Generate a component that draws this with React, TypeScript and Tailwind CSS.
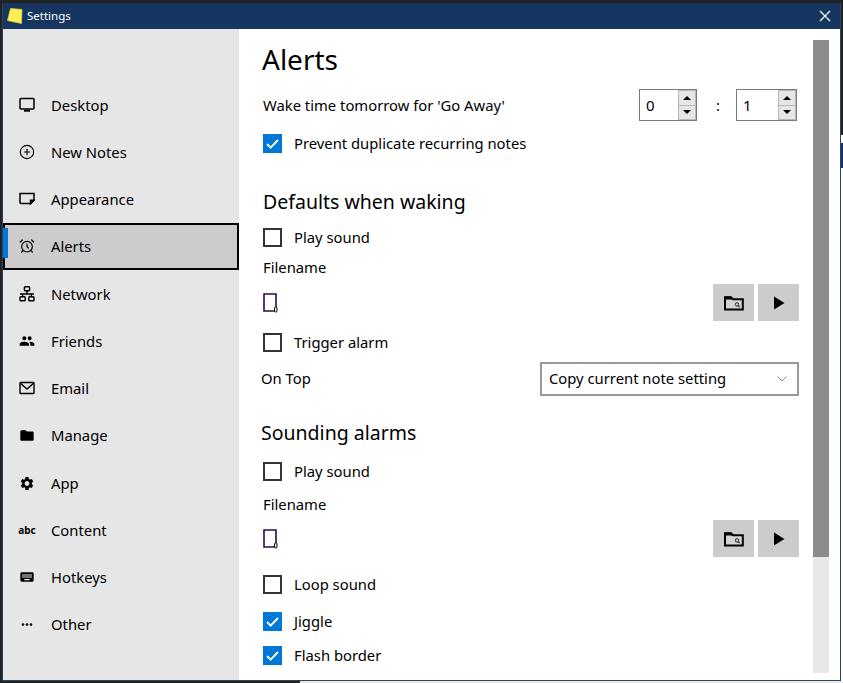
import React from "react";
import { AlarmClock, CirclePlus } from "lucide-react";
import { MdFolder, MdKeyboard, MdMoreHoriz, MdPeople, MdSettings } from "react-icons/md";

const DesktopIcon = () => (
  <svg width="16" height="16" viewBox="0 0 16 16" fill="none" stroke="black" strokeWidth="1.5">
    <rect x="1" y="1.5" width="14" height="10.500" rx="1" />
    <path d="M5 13.700h6" strokeWidth="2" />
  </svg>
);

const NoteIcon = () => (
  <svg width="16" height="16" viewBox="0 0 16 16" fill="none" stroke="black" strokeWidth="1.5">
    <path d="M1 2.500h14v6.700l-3.400 3.400H2a1 1 0 0 1-1-1z" />
    <path d="M14.900 9.200h-3.400v3.400z" fill="black" />
  </svg>
);

const NetworkIcon = () => (
  <svg width="16" height="16" viewBox="0 0 16 16" fill="none" stroke="black" strokeWidth="1.4">
    <rect x="5.400" y="0.800" width="5.200" height="4" rx="0.800" />
    <rect x="1" y="10.800" width="5.200" height="4" rx="0.800" />
    <rect x="9.800" y="10.800" width="5.200" height="4" rx="0.800" />
    <path d="M8 4.800v3.200M1 8h14M3.600 8v2.800M12.400 8v2.800" />
  </svg>
);

const EmailIcon = () => (
  <svg width="16" height="16" viewBox="0 0 16 16" fill="none" stroke="black" strokeWidth="1.4">
    <rect x="1" y="2.500" width="14" height="11" rx="0.800" />
    <path d="M1.400 3.200 8 9l6.600-5.800" />
  </svg>
);

const FolderSearchIcon = () => (
  <svg width="20" height="16" viewBox="0 0 20 16" fill="none">
    <path d="M1 14.500V2.200h6l2 2h9.800v10.300z" fill="#d4d4d4" stroke="black" strokeWidth="2" />
    <path d="M1 1.500h6l2.500 3H1z" fill="black" />
    <circle cx="13" cy="9.400" r="1.700" stroke="#222" strokeWidth="1" />
    <path d="m14.200 10.700 1.500 1.500" stroke="#222" strokeWidth="1.200" />
  </svg>
);

const FileIcon = () => (
  <svg width="15" height="20" viewBox="0 0 15 20" fill="none" className="block">
    <path d="M1 1h12v17H1z" fill="white" stroke="#2e0a4a" strokeWidth="1.600" />
    <rect x="11.500" y="14" width="2.500" height="5" rx="1" fill="#e8e8a0" stroke="#111" />
  </svg>
);

const navItems = [
  { label: "Desktop", icon: <DesktopIcon />, h: "h-[47px] pb-[1px]" },
  { label: "New Notes", icon: <CirclePlus size={18} strokeWidth={1.700} />, h: "h-[47px] pb-[1px]" },
  { label: "Appearance", icon: <NoteIcon />, h: "h-[47px] pb-[1px]" },
  { label: "Alerts", icon: <AlarmClock size={18} strokeWidth={1.800} />, h: "h-[47px] pb-[1px]", active: true },
  { label: "Network", icon: <NetworkIcon />, h: "h-[48px]" },
  { label: "Friends", icon: <MdPeople size={20} />, h: "h-[47px] pb-[1px]" },
  { label: "Email", icon: <EmailIcon />, h: "h-[47px] pb-[1px]" },
  { label: "Manage", icon: <MdFolder size={19} />, h: "h-[47px] pb-[1px]" },
  { label: "App", icon: <MdSettings size={19} />, h: "h-[48px]" },
  { label: "Content", icon: <span className="text-[10px] leading-none font-bold">abc</span>, h: "h-[47px] pb-[1px]" },
  { label: "Hotkeys", icon: <MdKeyboard size={20} />, h: "h-[47px] pb-[1px]" },
  { label: "Other", icon: <MdMoreHoriz size={17} />, h: "h-[47px] pb-[1px]" },
];

const Checkbox = ({ checked, label, className }: { checked?: boolean; label: string; className?: string }) => (
  <div className={`flex h-5 items-center pl-6 ${className}`}>
    {checked ? (
      <span className="flex h-[19px] w-[19px] items-center justify-center bg-[#0078d7]">
        <svg width="15" height="15" viewBox="0 0 15 15" fill="none" stroke="white" strokeWidth="2">
          <path d="m2 8 3.600 3.600L13 4" />
        </svg>
      </span>
    ) : (
      <span className="h-[19px] w-[19px] border-2 border-[#333333] bg-white" />
    )}
    <span className="ml-3 text-[14.800px]">{label}</span>
  </div>
);

const Spinner = ({ value, width }: { value: string; width: string }) => (
  <div className={`flex h-[32px] ${width} border border-[#7a7a7a] bg-white`}>
    <span className="flex-1 pl-[6px] text-[15px] leading-[30px]">{value}</span>
    <div className="flex w-[18px] flex-col gap-px border border-[#b8b8b8] bg-[#b8b8b8]">
      <span className="flex flex-1 items-center justify-center bg-[#e6e6e6]">
        <span className="h-0 w-0 border-x-[4px] border-b-[4px] border-x-transparent border-b-black" />
      </span>
      <span className="flex flex-1 items-center justify-center bg-[#e6e6e6]">
        <span className="h-0 w-0 border-x-[4px] border-t-[4px] border-x-transparent border-t-black" />
      </span>
    </div>
  </div>
);

const FileRow = ({ className }: { className: string }) => (
  <div className={`flex h-[37px] items-center pr-[14px] pl-[24px] ${className}`}>
    <FileIcon />
    <button className="ml-auto flex h-[37px] w-[41px] items-center justify-center bg-[#cccccc]">
      <FolderSearchIcon />
    </button>
    <button className="ml-[4px] flex h-[37px] w-[41px] items-center justify-center bg-[#cccccc]">
      <svg width="12" height="14" viewBox="0 0 12 14" fill="black">
        <path d="M1 0.500v13l10.500-6.500z" />
      </svg>
    </button>
  </div>
);

export default function App() {
  return (
    <div className="flex h-[683px] w-[843px] flex-col overflow-hidden bg-[#222222] pt-[3px] font-['Noto_Sans','Open_Sans',sans-serif] text-black">
      <div className="flex h-[678px] pl-[2px]">
        <div className="flex h-[678px] w-[839px] flex-col border-r border-b border-l border-[#24466e] bg-white">
          <div className="flex h-[26px] flex-none items-center bg-[#163660] text-white">
            <svg width="16" height="16" viewBox="0 0 16 16" className="ml-[4px]">
              <path d="M3.500 0.500 15 1.500l-0.500 14-14-3z" fill="#ffee55" stroke="#e3c93a" strokeWidth="0.800" strokeLinejoin="round" />
            </svg>
            <span className="ml-[4px] text-[11.500px]">Settings</span>
            <svg width="12" height="12" viewBox="0 0 12 12" stroke="white" strokeWidth="1.200" className="mr-[9px] ml-auto">
              <path d="m1 1 10 10M11 1 1 11" />
            </svg>
          </div>
          <div className="flex min-h-0 flex-1">
            <nav className="w-[236px] flex-none bg-[#e6e6e6] pt-[53px]">
              {navItems.map((item) => (
                <div
                  key={item.label}
                  className={`relative flex items-center text-[14.800px] ${item.h} ${
                    item.active ? "border-2 border-black bg-[#cccccc] pl-[14px]" : "pl-[16px]"
                  }`}
                >
                  {item.active && <span className="absolute top-[3px] -left-[2px] h-[30px] w-[5px] bg-[#0078d7]" />}
                  <span className="flex w-[16px] items-center justify-center">{item.icon}</span>
                  <span className="ml-[16px]">{item.label}</span>
                </div>
              ))}
            </nav>
            <main className="min-w-0 flex-1 pt-[12px]">
              <h1 className="h-[36px] pl-[23px] text-[28px] leading-[36px]">Alerts</h1>
              <div className="mt-3 flex h-[32px] items-center pr-[16px] pl-[24px] text-[14.800px]">
                <span>Wake time tomorrow for 'Go Away'</span>
                <div className="ml-auto">
                  <Spinner value="0" width="w-[58px]" />
                </div>
                <span className="w-[39px] pl-[3px] text-center">:</span>
                <Spinner value="1" width="w-[61px]" />
              </div>
              <Checkbox checked label="Prevent duplicate recurring notes" className="mt-3" />
              <h2 className="mt-[35px] h-7 pl-[24px] text-[19.500px] leading-7">Defaults when waking</h2>
              <Checkbox label="Play sound" className="mt-[11px]" />
              <div className="mt-[10px] h-5 pl-[24px] text-[14.800px] leading-5">Filename</div>
              <FileRow className="mt-[7px]" />
              <Checkbox label="Trigger alarm" className="mt-[11px]" />
              <div className="mt-[10px] flex h-[34px] items-center pr-[14px] pl-[22px] text-[14.800px]">
                <span className="pb-[2px]">On Top</span>
                <div className="ml-auto flex h-[34px] w-[259px] items-center border-2 border-[#999999] pr-[10px] pl-[7px]">
                  <span className="pb-[2px]">Copy current note setting</span>
                  <svg width="10" height="6" viewBox="0 0 10 6" fill="none" stroke="#888" className="ml-auto">
                    <path d="m0.500 0.500 4.500 4.500 4.500-4.500" />
                  </svg>
                </div>
              </div>
              <h2 className="mt-[23px] h-7 pl-[22px] text-[19.500px] leading-7">Sounding alarms</h2>
              <Checkbox label="Play sound" className="mt-[14px]" />
              <div className="mt-[13px] h-5 pl-[24px] text-[14.800px] leading-5">Filename</div>
              <FileRow className="mt-[6px]" />
              <Checkbox label="Loop sound" className="mt-[17px]" />
              <Checkbox checked label="Jiggle" className="mt-[17px]" />
              <Checkbox checked label="Flash border" className="mt-[14px]" />
            </main>
            <aside className="mt-[11px] mr-[11px] mb-[7px] flex w-[16px] flex-none flex-col bg-[#e8e8e8]">
              <div className="h-[517px] bg-[#8b8b8b]" />
            </aside>
          </div>
        </div>
        <div className="flex w-[2px] flex-col">
          <div className="h-[132px]" />
          <div className="h-[8px] bg-white" />
          <div className="h-[25px] bg-[#163660]" />
          <div className="flex-1 bg-white" />
        </div>
      </div>
      <div className="flex h-[2px]">
        <div className="w-[300px]" />
        <div className="flex-1 bg-[#e8e8e8]" />
      </div>
    </div>
  );
}
